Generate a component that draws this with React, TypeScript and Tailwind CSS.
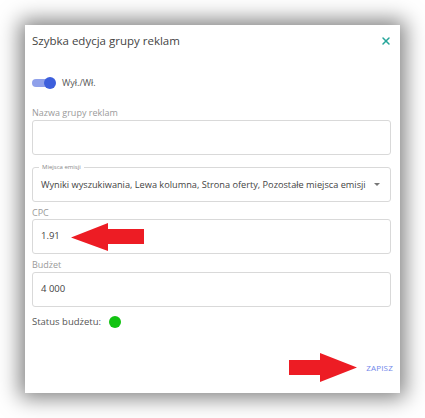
import { X } from "lucide-react";

const font = { fontFamily: '"Open Sans", "Liberation Sans", sans-serif' };

const ArrowLeft = () => (
  <svg width="73" height="28" viewBox="0 0 73 28" className="absolute left-[38px] top-[3px]">
    <polygon points="0,14.5 37,0 37,6 73,6 73,21 37,21 37,28" fill="#ed1c24" />
  </svg>
);

const ArrowRight = () => (
  <svg width="68" height="29" viewBox="0 0 68 29">
    <polygon points="0,7 31,7 31,0 68,14.5 31,29 31,22 0,22" fill="#ed1c24" />
  </svg>
);

const Label = ({ text }: { text: string }) => (
  <p className="h-[12px] leading-[12px] text-[9px] text-[#9a9a9a]">{text}</p>
);

const Input = ({ value, children }: { value?: string; children?: React.ReactNode }) => (
  <div className="relative h-[35px] border border-[#d9d9d9] rounded-[3px] flex items-center px-[8px] text-[9.5px] text-[#444]">
    {value}
    {children}
  </div>
);

export default function App() {
  return (
    <div className="w-[425px] h-[418px] bg-white p-[25px]" style={font}>
      <div className="w-[375px] h-[368px] bg-white flex flex-col pl-[7px] pr-[9px] shadow-[0_0_20px_5px_rgba(0,0,0,0.5)]">
        <div className="mt-[6px] h-[20px] flex items-center justify-between">
          <h1 className="text-[11.5px] text-[#444]">Szybka edycja grupy reklam</h1>
          <X size={12} strokeWidth={3} className="text-[#26a69a] mr-[-1px]" />
        </div>

        <div className="mt-[24px] h-[16px] flex items-center gap-[6px]">
          <div className="relative w-[24px] h-[16px] flex items-center">
            <div className="w-[21px] h-[8px] rounded-full bg-[#8fa0ea]" />
            <div className="absolute left-[12px] top-[2px] w-[12px] h-[12px] rounded-full bg-[#3d5fdc]" />
          </div>
          <span className="text-[9px] text-[#555]">Wył./Wł.</span>
        </div>

        <div className="mt-[16px]">
          <Label text="Nazwa grupy reklam" />
        </div>
        <div className="mt-[1px]">
          <Input />
        </div>

        <div className="mt-[12px] relative h-[35px] border border-[#d9d9d9] rounded-[3px] flex items-center justify-between pl-[8px] pr-[10px]">
          <span className="absolute left-[6px] top-[-6px] bg-white px-[3px] text-[6px] leading-[10px] text-[#888]">Miejsca emisji</span>
          <span className="text-[9.2px] text-[#444] whitespace-nowrap">Wyniki wyszukiwania, Lewa kolumna, Strona oferty, Pozostałe miejsca emisji</span>
          <span className="w-0 h-0 border-l-[3px] border-r-[3px] border-t-[3px] border-l-transparent border-r-transparent border-t-[#777]" />
        </div>

        <div className="mt-[5px]">
          <Label text="CPC" />
        </div>
        <div>
          <Input value="1.91">
            <ArrowLeft />
          </Input>
        </div>

        <div className="mt-[5px]">
          <Label text="Budżet" />
        </div>
        <div className="mt-[1px]">
          <Input value="4 000" />
        </div>

        <div className="mt-[7px] h-[16px] flex items-center gap-[8px]">
          <span className="text-[9.5px] text-[#555]">Status budżetu:</span>
          <span className="w-[12px] h-[12px] rounded-full bg-[#11c311]" />
        </div>

        <div className="mt-[23px] h-[29px] flex items-center justify-end gap-[9px] mr-[-2px]">
          <ArrowRight />
          <span className="text-[8px] text-[#7087ea] tracking-[0.2px]">ZAPISZ</span>
        </div>
      </div>
    </div>
  );
}
